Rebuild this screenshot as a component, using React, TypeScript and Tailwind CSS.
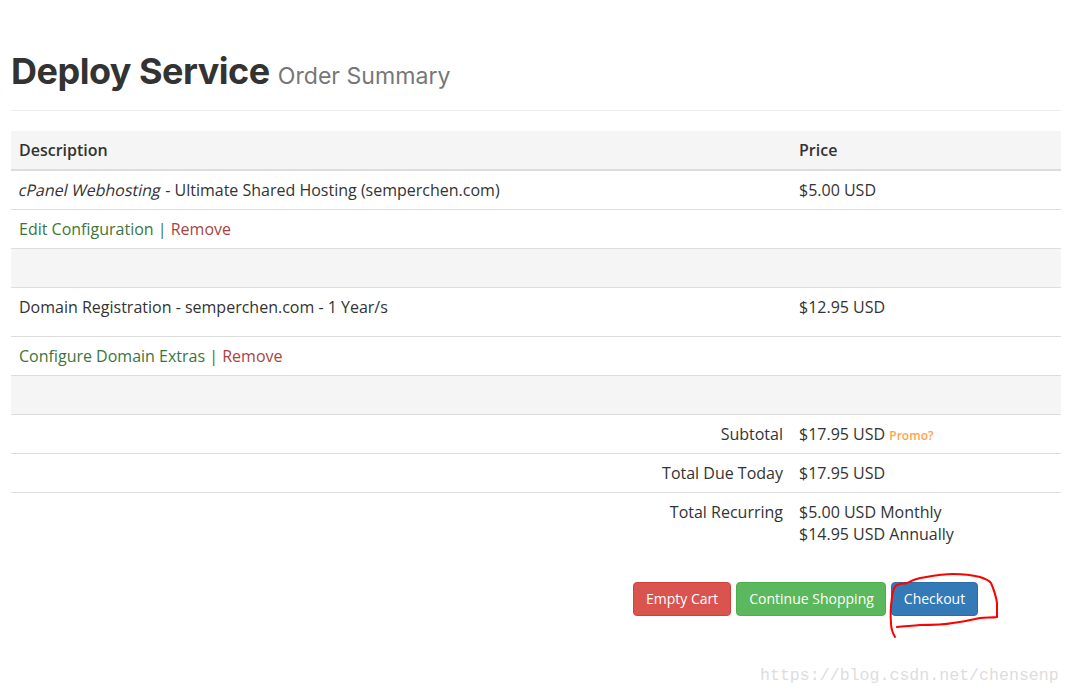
const rowBorder = 'border-b border-[#dddddd]'

function Cell({ children, className = '' }: { children?: React.ReactNode; className?: string }) {
  return <td className={`px-2 align-top ${className}`}>{children}</td>
}

export default function App() {
  return (
    <div className="relative h-[695px] w-[1070px] overflow-hidden bg-white font-['Open_Sans',sans-serif] text-[16px] leading-[22px] text-[#333333]">
      <div className="pl-[11px] pr-[9px] pt-[49px]">
        <div className="h-[62px] border-b border-[#eeeeee]">
          <h1 className="font-['Inter',sans-serif] text-[36px] font-bold leading-[44px] tracking-[-0.5px] text-[#333333]">
            Deploy Service{' '}
            <span className="text-[23.1px] font-normal tracking-normal text-[#777777]">Order Summary</span>
          </h1>
        </div>

        <table className="mt-5 w-[1050px] table-fixed border-collapse">
          <colgroup>
            <col className="w-[780px]" />
            <col />
          </colgroup>
          <thead>
            <tr className="h-[39px] border-b-2 border-[#dddddd] bg-[#f5f5f5] font-semibold">
              <Cell className="!align-middle">Description</Cell>
              <Cell className="!align-middle">Price</Cell>
            </tr>
          </thead>
          <tbody>
            <tr className={`h-[39px] ${rowBorder}`}>
              <Cell className="pt-[8px]">
                <em className="inline-block -skew-x-12 not-italic">cPanel Webhosting</em> - Ultimate Shared Hosting (semperchen.com)
              </Cell>
              <Cell className="pt-[8px]">$5.00 USD</Cell>
            </tr>
            <tr className={`h-[39px] ${rowBorder}`}>
              <Cell className="pt-[8px]">
                <a className="text-[#3c763d]">Edit Configuration</a>{' '}
                <span className="text-[#3c763d]">|</span>{' '}
                <a className="text-[#a94442]">Remove</a>
              </Cell>
              <Cell />
            </tr>
            <tr className={`h-[39px] bg-[#f5f5f5] ${rowBorder}`}>
              <Cell />
              <Cell />
            </tr>
            <tr className={`h-[49px] ${rowBorder}`}>
              <Cell className="pt-[8px]">Domain Registration - semperchen.com - 1 Year/s</Cell>
              <Cell className="pt-[8px]">$12.95 USD</Cell>
            </tr>
            <tr className={`h-[39px] ${rowBorder}`}>
              <Cell className="pt-[8px]">
                <a className="text-[#3c763d]">Configure Domain Extras</a>{' '}
                <span className="text-[#3c763d]">|</span>{' '}
                <a className="text-[#a94442]">Remove</a>
              </Cell>
              <Cell />
            </tr>
            <tr className={`h-[39px] bg-[#f5f5f5] ${rowBorder}`}>
              <Cell />
              <Cell />
            </tr>
            <tr className={`h-[39px] ${rowBorder}`}>
              <Cell className="pt-[8px] text-right">Subtotal</Cell>
              <Cell className="pt-[8px]">
                $17.95 USD{' '}
                <a className="text-[12px] font-semibold text-[#ffa347]">Promo?</a>
              </Cell>
            </tr>
            <tr className={`h-[39px] ${rowBorder}`}>
              <Cell className="pt-[8px] text-right">Total Due Today</Cell>
              <Cell className="pt-[8px]">$17.95 USD</Cell>
            </tr>
            <tr>
              <Cell className="pt-[8px] text-right">Total Recurring</Cell>
              <Cell className="pt-[8px]">
                $5.00 USD Monthly
                <br />
                $14.95 USD Annually
              </Cell>
            </tr>
          </tbody>
        </table>

        <div className="mt-[37px] flex gap-[5px] pl-[622px] text-[14px] leading-[20px] text-white">
          <button className="h-[34px] rounded border border-[#d43f3a] bg-[#d9534f] px-3">Empty Cart</button>
          <button className="h-[34px] rounded border border-[#4cae4c] bg-[#5cb85c] pl-3 pr-[11px]">Continue Shopping</button>
          <button className="h-[34px] rounded border border-[#2e6da4] bg-[#337ab7] px-3">Checkout</button>
        </div>
      </div>

      {/* hand drawn circle round the checkout button */}
      <svg className="absolute left-0 top-0" width="1070" height="695" fill="none">
        <path
          d="M895 637 C892 632 891 628 891 623 C890 612 891 604 892 597 C893 590 894 586 897 585 C901 583 904 584 907 583 C912 580 916 579 920 578 C932 576 942 574 953 574 C963 574 972 575 980 577 C986 579 989 580 991 583 C994 590 996 596 997 603 L997 617 C992 618 986 617 980 618 C971 620 962 622 953 623 C942 625 931 625 920 625 C911 626 904 626 897 627"
          stroke="#ff0000"
          strokeWidth="2"
          strokeLinecap="round"
        />
      </svg>

      <div className="absolute left-[760px] top-[666px] font-['Liberation_Mono',monospace] text-[16.6px] leading-[20px] text-[#dddddd]">
        https://blog.csdn.net/chensenp
      </div>
    </div>
  )
}
